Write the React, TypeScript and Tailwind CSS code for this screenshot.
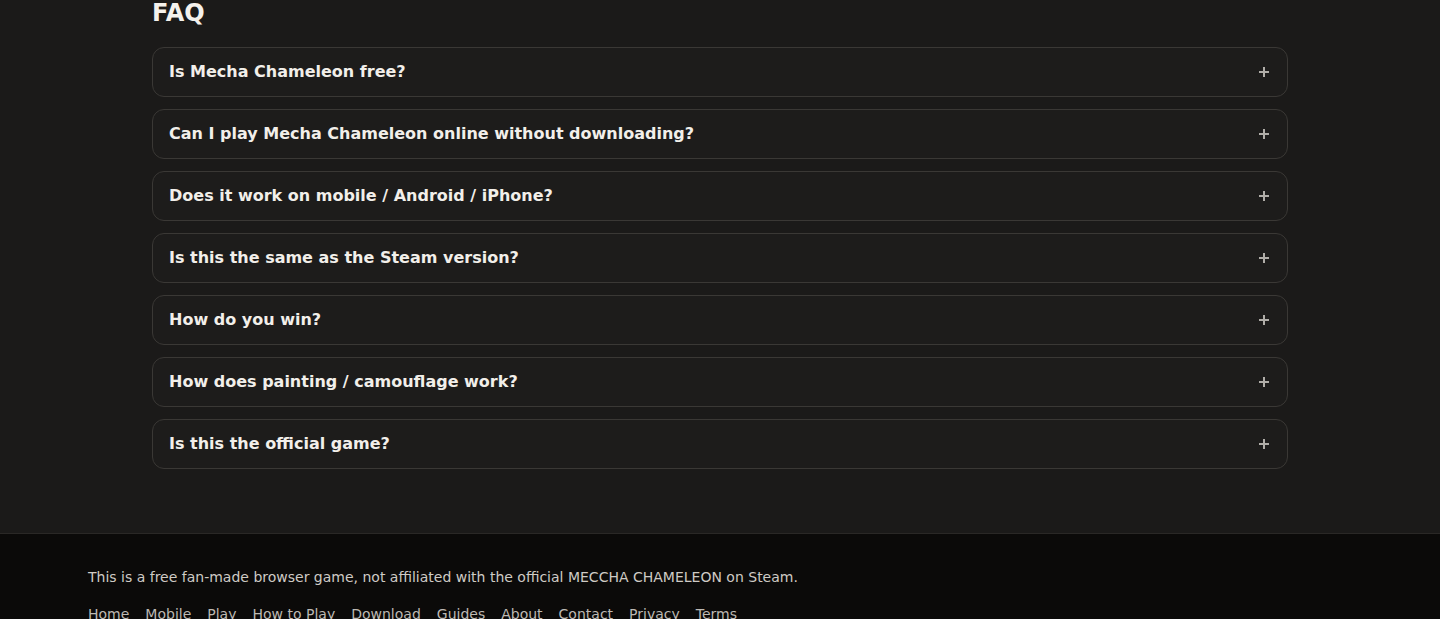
import { useState } from "react";

const faqs = [
  "Is Mecha Chameleon free?",
  "Can I play Mecha Chameleon online without downloading?",
  "Does it work on mobile / Android / iPhone?",
  "Is this the same as the Steam version?",
  "How do you win?",
  "How does painting / camouflage work?",
  "Is this the official game?",
];

const links = ["Home", "Mobile", "Play", "How to Play", "Download", "Guides", "About", "Contact", "Privacy", "Terms"];

function FaqItem({ q }: { q: string }) {
  const [open, setOpen] = useState(false);
  return (
    <div className="rounded-xl border border-[#3a3835] bg-[#1d1c1b]">
      <button
        onClick={() => setOpen(!open)}
        className="flex h-[48px] w-full items-center justify-between pl-4 pr-[17px] text-left"
      >
        <span className="text-base font-bold text-[#f2efea]">{q}</span>
        <span className="text-[#b0ada8]">
          <svg width="12" height="12" viewBox="0 0 12 12">
            <path d="M6 1v10M1 6h10" stroke="currentColor" strokeWidth="2" />
          </svg>
        </span>
      </button>
    </div>
  );
}

export default function App() {
  return (
    <div className="min-h-screen bg-[#1b1a19] font-['DejaVu_Sans',sans-serif]">
      {/* FAQ */}
      <section className="mx-auto w-[1136px] pb-16">
        <h2 className="mt-[-3px] mb-[18px] text-2xl leading-8 font-bold text-[#f4f1ec]">FAQ</h2>
        <div className="flex flex-col gap-3">
          {faqs.map((q) => (
            <FaqItem key={q} q={q} />
          ))}
        </div>
      </section>

      {/* FOOTER */}
      <footer className="border-t border-[#2a2826] bg-[#0b0a09] px-[88px] pt-[33px] pb-8">
        <p className="text-sm text-[#cfcbc5]">
          This is a free fan-made browser game, not affiliated with the official MECCHA CHAMELEON on Steam.
        </p>
        <nav className="mt-[17px] flex gap-4 text-sm text-[#bdb9b3]">
          {links.map((l) => (
            <a key={l} href="#" className="hover:text-white">
              {l}
            </a>
          ))}
        </nav>
      </footer>
    </div>
  );
}
